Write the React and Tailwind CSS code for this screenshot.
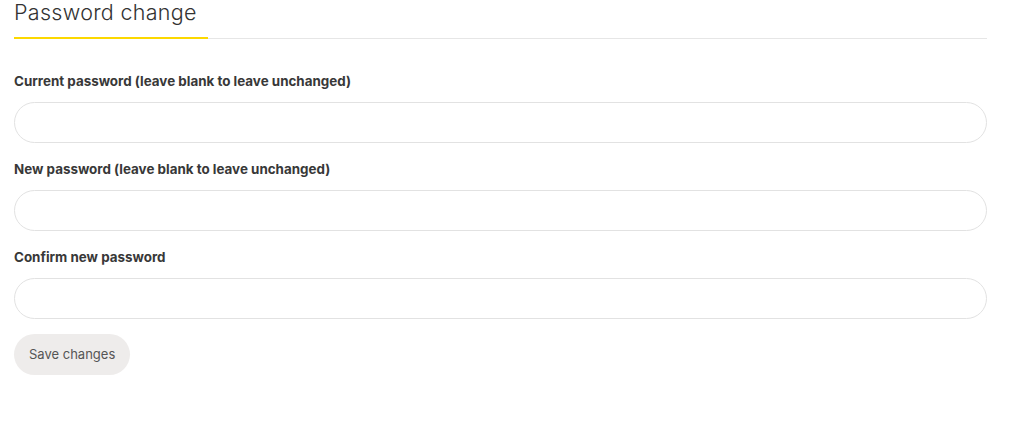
export default function App() {
  const fields = [
    "Current password (leave blank to leave unchanged)",
    "New password (leave blank to leave unchanged)",
    "Confirm new password",
  ];

  return (
    <div
      className="bg-white w-[1024px] h-[426px] overflow-hidden"
      style={{ fontFamily: "Inter, 'Noto Sans', sans-serif" }}
    >
      <div className="ml-[14px] w-[973px]">
        {/* Heading */}
        <div className="relative border-b border-[#e6e6e6] h-[39px]">
          <h2 className="text-[21.5px] leading-none font-light text-[#333] pt-[2px] tracking-[0.3px]">
            Password change
          </h2>
          <div className="absolute left-0 -bottom-px w-[194px] h-[2px] bg-[#fcd800]" />
        </div>

        {/* Form */}
        <form className="pt-[34px] flex flex-col">
          {fields.map((label, i) => (
            <div key={label} className={i < 2 ? "mb-[18px]" : "mb-[15px]"}>
              <label className="block text-[13.4px] font-bold text-[#383838] leading-[16px] mb-[13px]">
                {label}
              </label>
              <input
                type="password"
                className="block w-full h-[41px] rounded-full border border-[#e2e2e2] bg-white px-5 outline-none"
              />
            </div>
          ))}
          <div>
            <button
              type="button"
              className="h-[41px] px-[15px] rounded-full bg-[#eeeceb] text-[13px] text-[#555] leading-none"
            >
              Save changes
            </button>
          </div>
        </form>
      </div>
    </div>
  );
}
